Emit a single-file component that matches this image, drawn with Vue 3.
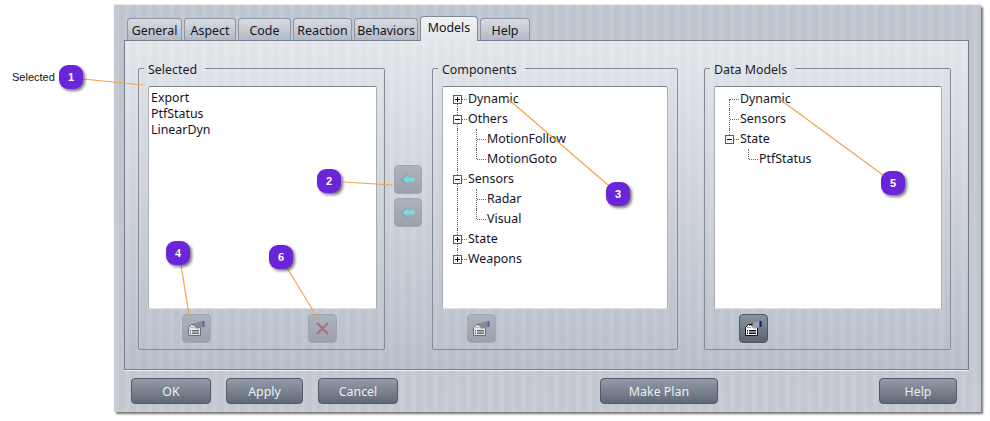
<template>
  <div class="page">
    <div class="window">
      <div class="tabs">
        <div
          v-for="tab in tabs"
          :key="tab.name"
          class="tab"
          :class="{ active: tab.name === 'Models' }"
          :style="{ width: tab.width + 'px' }"
        >
          {{ tab.name }}
        </div>
      </div>

      <div class="panel">
        <fieldset class="group group-selected">
          <legend>Selected</legend>
          <div class="list plain">
            <div v-for="item in selected" :key="item" class="plain-row">{{ item }}</div>
          </div>
          <div class="tools tools-selected">
            <button class="tool disabled">
              <svg width="17" height="15" viewBox="0 0 17 15">
                <path d="M.5 6.5 3.5 3.5h9v11H.5z" fill="#e3e5e9" stroke="#6a6e76" />
                <path d="M6 5 9 1.5 14.5 0v6l-4 1.5H8z" fill="#868a92" />
                <path d="M2.5 6.5h4M4.5 4.5h3M6.5 2.5h2" stroke="#868a92" stroke-dasharray="1 1" />
                <rect x="14.5" y="0" width="2" height="6" fill="#5a5fb0" />
                <path d="M2 9.5h1M4 9.5h7M2 11h1M4 11h7M2 12.5h1M4 12.5h7" stroke="#6a6e76" />
              </svg>
            </button>
            <button class="tool disabled">
              <svg width="13" height="13" viewBox="0 0 13 13">
                <path d="M1 1 12 12M12 1 1 12" stroke="#b56a74" stroke-width="2" fill="none" />
              </svg>
            </button>
          </div>
        </fieldset>

        <div class="arrows">
          <button v-for="n in 2" :key="n" class="tool disabled">
            <svg width="14" height="11" viewBox="0 0 14 11">
              <path d="M.8 5.5 6 .5V3.5H13.5V7.5H6V10.5z" fill="#74dfe2" />
              <path d="M6 .5 .8 5.5 6 10.5" fill="none" stroke="#7d858f" />
            </svg>
          </button>
        </div>

        <fieldset class="group group-components">
          <legend>Components</legend>
          <div class="list">
            <div v-for="row in components" :key="row.label" class="tree-row">
              <span v-for="(cell, i) in row.cells" :key="i" class="cell" :class="cell">
                <span v-if="i === row.cells.length - 1 && row.box" class="box" :class="row.box"></span>
              </span>
              <span class="tree-label">{{ row.label }}</span>
            </div>
          </div>
          <div class="tools">
            <button class="tool disabled">
              <svg width="17" height="15" viewBox="0 0 17 15">
                <path d="M.5 6.5 3.5 3.5h9v11H.5z" fill="#e3e5e9" stroke="#6a6e76" />
                <path d="M6 5 9 1.5 14.5 0v6l-4 1.5H8z" fill="#868a92" />
                <path d="M2.5 6.5h4M4.5 4.5h3M6.5 2.5h2" stroke="#868a92" stroke-dasharray="1 1" />
                <rect x="14.5" y="0" width="2" height="6" fill="#5a5fb0" />
                <path d="M2 9.5h1M4 9.5h7M2 11h1M4 11h7M2 12.5h1M4 12.5h7" stroke="#6a6e76" />
              </svg>
            </button>
          </div>
        </fieldset>

        <fieldset class="group group-models">
          <legend>Data Models</legend>
          <div class="list">
            <div v-for="row in models" :key="row.label" class="tree-row">
              <span v-for="(cell, i) in row.cells" :key="i" class="cell" :class="cell">
                <span v-if="i === row.cells.length - 1 && row.box" class="box" :class="row.box"></span>
              </span>
              <span class="tree-label">{{ row.label }}</span>
            </div>
          </div>
          <div class="tools">
            <button class="tool enabled">
              <svg width="17" height="15" viewBox="0 0 17 15">
                <path d="M.5 6.5 3.5 3.5h9v11H.5z" fill="#fff" stroke="#111" />
                <path d="M6 5 9 1.5 14.5 0v6l-4 1.5H8z" fill="#a0a3a9" />
                <path d="M2.5 6.5h4M4.5 4.5h3M6.5 2.5h2" stroke="#333" stroke-dasharray="1 1" />
                <rect x="14.5" y="0" width="2" height="6" fill="#12128a" />
                <path d="M2 9.5h1M4 9.5h7M2 11h1M4 11h7M2 12.5h1M4 12.5h7" stroke="#111" />
              </svg>
            </button>
          </div>
        </fieldset>
      </div>

      <div class="actions">
        <button class="action w-ok">OK</button>
        <button class="action w-apply">Apply</button>
        <button class="action w-ok">Cancel</button>
        <button class="action w-plan">Make Plan</button>
        <button class="action w-help">Help</button>
      </div>
    </div>

    <!-- annotations on top of the screenshot -->
    <span class="note">Selected</span>
    <svg class="leaders" width="990" height="421">
      <line v-for="(l, i) in leaders" :key="i" :x1="l[0]" :y1="l[1]" :x2="l[2]" :y2="l[3]" />
    </svg>
    <div
      v-for="c in callouts"
      :key="c.n"
      class="callout"
      :class="{ serif: c.serif }"
      :style="{ left: c.x + 'px', top: c.y + 'px' }"
    >
      {{ c.n }}
    </div>
  </div>
</template>

<script setup>
const tabs = [
  { name: 'General', width: 55 },
  { name: 'Aspect', width: 52 },
  { name: 'Code', width: 53 },
  { name: 'Reaction', width: 59 },
  { name: 'Behaviors', width: 64 },
  { name: 'Models', width: 58 },
  { name: 'Help', width: 50 }
]

const selected = ['Export', 'PtfStatus', 'LinearDyn']

const components = [
  { label: 'Dynamic', cells: ['first'], box: 'plus' },
  { label: 'Others', cells: ['tee'], box: 'minus' },
  { label: 'MotionFollow', cells: ['through', 'tee'] },
  { label: 'MotionGoto', cells: ['through', 'last'] },
  { label: 'Sensors', cells: ['tee'], box: 'minus' },
  { label: 'Radar', cells: ['through', 'tee'] },
  { label: 'Visual', cells: ['through', 'last'] },
  { label: 'State', cells: ['tee'], box: 'plus' },
  { label: 'Weapons', cells: ['last'], box: 'plus' }
]

const models = [
  { label: 'Dynamic', cells: ['first'] },
  { label: 'Sensors', cells: ['tee'] },
  { label: 'State', cells: ['last'], box: 'minus' },
  { label: 'PtfStatus', cells: ['empty', 'last'] }
]

const leaders = [
  [83, 79, 143, 85],
  [343, 182, 393, 185],
  [507, 98, 608, 185],
  [181, 265, 189, 315],
  [778, 98, 883, 175],
  [287, 268, 317, 317]
]

const callouts = [
  { n: 1, x: 59, y: 65 },
  { n: 2, x: 317, y: 169 },
  { n: 3, x: 606, y: 182 },
  { n: 4, x: 166, y: 241, serif: true },
  { n: 5, x: 881, y: 171 },
  { n: 6, x: 269, y: 245, serif: true }
]
</script>

<style scoped>
.page {
  position: relative;
  width: 990px;
  height: 421px;
  padding: 5px 0 0 114px;
  box-sizing: border-box;
  overflow: hidden;
  font-family: "Noto Sans", sans-serif;
  font-size: 12.4px;
  color: #14141f;
}

.window {
  width: 867px;
  height: 407px;
  box-sizing: border-box;
  padding: 11px 0 0 10px;
  background:
    repeating-linear-gradient(90deg, rgba(255, 255, 255, 0.05) 0 5px, rgba(0, 0, 0, 0.015) 5px 11px),
    linear-gradient(#c1c7d0, #c5cad3);
  box-shadow: 2px 2px 2px rgba(70, 70, 70, 0.75), 0 -1px 2px rgba(0, 0, 0, 0.08);
}

.tabs {
  display: flex;
  align-items: flex-end;
  gap: 2px;
  padding-left: 3px;
}

.tab {
  height: 22px;
  line-height: 23px;
  box-sizing: border-box;
  text-align: center;
  border: 1px solid #8e96a2;
  border-bottom: none;
  border-radius: 4px 4px 0 0;
  background: linear-gradient(#d8dce2, #b3bac6);
}

.tab.active {
  position: relative;
  z-index: 1;
  height: 25px;
  line-height: 22px;
  margin-bottom: -1px;
  border-color: #7e8794;
  background: linear-gradient(#f1f2f4, #e2e5ea);
}

.panel {
  display: flex;
  align-items: flex-start;
  width: 845px;
  height: 330px;
  box-sizing: border-box;
  padding: 18px 16px 0 13px;
  border: 1px solid #747d89;
  box-shadow: 0 1px 0 #eef0f3;
  background:
    repeating-linear-gradient(90deg, rgba(255, 255, 255, 0.05) 0 5px, rgba(0, 0, 0, 0.012) 5px 11px),
    linear-gradient(#e4e7ec, #b9c0cb);
}

.group {
  margin: 0;
  min-width: 0;
  box-sizing: border-box;
  width: 247px;
  height: 291px;
  padding: 9px 8px 6px 9px;
  border: 1px solid #868c96;
  border-radius: 2px;
}

.group legend {
  margin-left: -4px;
  padding: 0 8px 0 4px;
  height: 18px;
  line-height: 21px;
  color: #1c1c28;
}

.group-selected {
  padding-right: 7px;
}

.group-components {
  width: 246px;
  padding-right: 9px;
  margin-right: 26px;
}

.list {
  height: 223px;
  box-sizing: border-box;
  padding: 2px 0 0 5px;
  background: #fff;
  border: 1px solid #a9aeb6;
  border-top-color: #7b838e;
  border-bottom-color: #dfe2e6;
  border-radius: 2px;
}

.list.plain {
  padding: 3px 0 0 2px;
}

.plain-row {
  height: 16px;
  line-height: 16px;
}

.tree-row {
  display: flex;
  height: 20px;
  line-height: 19px;
}

.tree-label {
  margin-left: 1px;
}

.cell {
  position: relative;
  width: 19px;
  height: 20px;
  flex: none;
}

.cell::before {
  content: '';
  position: absolute;
  left: 9px;
  top: 0;
  bottom: 0;
  border-left: 1px dotted #666;
}

.cell::after {
  content: '';
  position: absolute;
  left: 10px;
  width: 9px;
  top: 10px;
  border-top: 1px dotted #666;
}

.cell.through::after,
.cell.empty::after {
  display: none;
}

.cell.empty::before {
  display: none;
}

.cell.first::before {
  top: 10px;
}

.cell.last::before {
  bottom: 10px;
}

.box {
  position: absolute;
  z-index: 1;
  left: 5px;
  top: 6px;
  width: 9px;
  height: 9px;
  box-sizing: border-box;
  border: 1px solid #5a5a5a;
  background: #fff;
}

.box::before {
  content: '';
  position: absolute;
  left: 1px;
  top: 3px;
  width: 5px;
  height: 1px;
  background: #000;
}

.box.plus::after {
  content: '';
  position: absolute;
  left: 3px;
  top: 1px;
  width: 1px;
  height: 5px;
  background: #000;
}

.tools {
  display: flex;
  gap: 97px;
  margin-top: 5px;
  padding-left: 25px;
}

.tools-selected {
  padding-left: 34px;
}

.tool {
  display: flex;
  align-items: center;
  justify-content: center;
  width: 29px;
  height: 29px;
  padding: 0;
  box-sizing: border-box;
  border-radius: 4px;
}

.tool.disabled {
  border: 1px solid #a1a7b1;
  background: linear-gradient(#adb3bd, #9aa1ac);
}

.tool.enabled {
  border: 1px solid #4f5763;
  background: linear-gradient(#8b93a0, #5a6370);
}

.arrows {
  display: flex;
  flex-direction: column;
  gap: 4px;
  margin: 106px 10px 0 9px;
}

.arrows .tool {
  width: 28px;
}

.actions {
  display: flex;
  align-items: flex-start;
  gap: 15px;
  margin-top: 8px;
  padding-left: 7px;
  width: 833px;
  box-sizing: border-box;
}

.action {
  height: 26px;
  padding: 0;
  box-sizing: border-box;
  border: 1px solid #525a66;
  border-radius: 4px;
  background: linear-gradient(#939ba7, #606977);
  color: #e9eff5;
  font-family: inherit;
  font-size: 12.4px;
}

.w-ok {
  width: 80px;
}

.w-apply {
  width: 77px;
}

.w-plan {
  width: 118px;
  margin-left: 187px;
}

.w-help {
  width: 78px;
  margin-left: auto;
}

.note {
  position: absolute;
  left: 12px;
  top: 70px;
  font-family: "Liberation Sans", sans-serif;
  font-size: 11px;
  line-height: 14px;
  color: #111;
}

.leaders {
  position: absolute;
  left: 0;
  top: 0;
  pointer-events: none;
}

.leaders line {
  stroke: #f6a24a;
  stroke-width: 1.2;
}

.callout {
  position: absolute;
  width: 24px;
  height: 24px;
  border-radius: 9px;
  background: #6a25d8;
  box-shadow: 2px 2px 3px rgba(50, 50, 50, 0.65);
  color: #fff;
  font-family: "Liberation Sans", sans-serif;
  font-size: 11px;
  font-weight: 700;
  line-height: 24px;
  text-align: center;
}

.callout.serif {
  font-family: "Liberation Serif", serif;
  font-size: 12px;
}
</style>
